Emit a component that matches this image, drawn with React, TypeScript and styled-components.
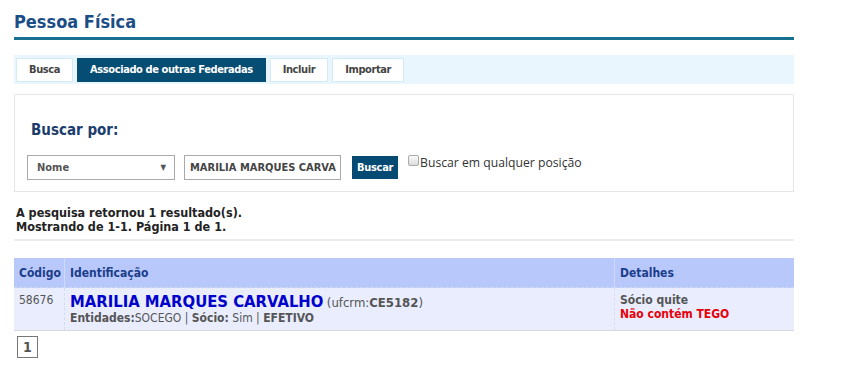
import React from 'react'
import styled, { createGlobalStyle } from 'styled-components'

const GlobalStyle = createGlobalStyle`
  body {
    margin: 0;
    background: #fff;
    font-family: Tahoma, "DejaVu Sans Condensed", "DejaVu Sans", sans-serif;
    color: #333;
  }
`

const Page = styled.div`
  width: 780px;
  margin-left: 14px;
  padding-top: 10px;
`

const Title = styled.h1`
  margin: 0;
  font-size: 18px;
  font-weight: bold;
  color: #1b4d86;
  line-height: 23px;
  padding-bottom: 4px;
  border-bottom: 3px solid #17708f;
`

const TabBar = styled.div`
  margin-top: 15px;
  background: #eaf6fd;
  height: 29px;
  display: flex;
  align-items: center;
  gap: 4px;
  padding-left: 2px;
`

const Tab = styled.div<{ $active?: boolean }>`
  height: 24px;
  box-sizing: border-box;
  padding: 0 12px;
  display: flex;
  align-items: center;
  font-size: 11px;
  font-weight: bold;
  letter-spacing: -0.4px;
  color: ${(p) => (p.$active ? '#fff' : '#444')};
  background: ${(p) => (p.$active ? '#064d73' : '#fff')};
  border: 1px solid ${(p) => (p.$active ? '#064d73' : '#d3eaf7')};
`

const SearchPanel = styled.div`
  margin-top: 10px;
  border: 1px solid #e6e6e6;
  height: 98px;
  box-sizing: border-box;
  padding: 26px 12px 0 12px;
`

const SearchLabel = styled.div`
  font-size: 15px;
  font-weight: bold;
  color: #1c3d6b;
  padding-left: 4px;
  line-height: 18px;
`

const SearchRow = styled.div`
  margin-top: 16px;
  display: flex;
  align-items: flex-start;
`

const Select = styled.div`
  width: 148px;
  height: 25px;
  box-sizing: border-box;
  border: 1px solid #aaa;
  display: flex;
  align-items: center;
  justify-content: space-between;
  padding: 0 8px 0 9px;
  font-size: 11px;
  font-weight: bold;
  color: #555;
  & span.arrow {
    font-size: 8px;
    color: #555;
  }
`

const TextInput = styled.div`
  margin-left: 9px;
  width: 157px;
  height: 25px;
  box-sizing: border-box;
  border: 1px solid #aaa;
  display: flex;
  align-items: center;
  padding-left: 5px;
  font-size: 11px;
  font-weight: bold;
  color: #444;
  overflow: hidden;
  white-space: nowrap;
`

const Button = styled.div`
  margin-left: 11px;
  margin-top: 1px;
  height: 23px;
  padding: 0 5px;
  display: flex;
  align-items: center;
  background: #054a72;
  color: #fff;
  font-size: 11px;
  font-weight: bold;
  letter-spacing: -0.3px;
`

const CheckLabel = styled.label`
  display: flex;
  align-items: flex-start;
  margin-left: 10px;
  font-family: "Open Sans", sans-serif;
  font-size: 12.2px;
  color: #333;
  line-height: 16px;
`

const Check = styled.span`
  width: 11px;
  height: 11px;
  box-sizing: border-box;
  border: 1px solid #aaa;
  border-radius: 2px;
  background: linear-gradient(#fafafa, #ddd);
  margin-right: 1px;
`

const Summary = styled.div`
  margin-top: 14px;
  padding-left: 2px;
  font-size: 12.5px;
  font-weight: bold;
  color: #222;
  line-height: 14px;
  padding-bottom: 5px;
  border-bottom: 2px solid #ececec;
`

const Table = styled.div`
  margin-top: 17px;
  display: grid;
  grid-template-columns: 50px 550px 180px;
  border-bottom: 1px solid #d9d9d9;
`

const HeadCell = styled.div<{ $sep?: boolean }>`
  background: #b8c8fb;
  height: 30px;
  box-sizing: border-box;
  display: flex;
  align-items: center;
  padding-left: 5px;
  font-size: 12px;
  font-weight: bold;
  color: #1c3d8a;
  border-left: ${(p) => (p.$sep ? '1px solid #cfd9fb' : 'none')};
  border-bottom: 1px dashed #cfd6f0;
`

const Cell = styled.div<{ $sep?: boolean }>`
  background: #e9edfd;
  height: 42px;
  box-sizing: border-box;
  padding: 5px 5px 0 5px;
  font-size: 12px;
  color: #555;
  border-left: ${(p) => (p.$sep ? '1px dashed #d5dbf3' : 'none')};
  line-height: 14px;
`

const Name = styled.span`
  font-size: 16.5px;
  font-weight: bold;
  color: #0000cc;
  line-height: 18px;
`

const Crm = styled.span`
  font-size: 13px;
  color: #555;
`

const Status = styled.div<{ $warn?: boolean }>`
  font-weight: bold;
  color: ${(p) => (p.$warn ? '#e8000b' : '#555')};
`

const Pager = styled.div`
  margin-top: 5px;
  margin-left: 3px;
  width: 21px;
  height: 22px;
  box-sizing: border-box;
  border: 1px solid #777;
  display: flex;
  align-items: center;
  justify-content: center;
  font-size: 14px;
  font-weight: bold;
  color: #555;
`

const tabs = ['Busca', 'Associado de outras Federadas', 'Incluir', 'Importar']

export default function App() {
  return (
    <>
      <GlobalStyle />
      <Page>
        <Title>Pessoa Física</Title>
        <TabBar>
          {tabs.map((t, i) => (
            <Tab key={t} $active={i === 1}>{t}</Tab>
          ))}
        </TabBar>
        <SearchPanel>
          <SearchLabel>Buscar por:</SearchLabel>
          <SearchRow>
            <Select>
              <span>Nome</span>
              <span className="arrow">▼</span>
            </Select>
            <TextInput>MARILIA MARQUES CARVA</TextInput>
            <Button>Buscar</Button>
            <CheckLabel>
              <Check />
              Buscar em qualquer posição
            </CheckLabel>
          </SearchRow>
        </SearchPanel>
        <Summary>
          A pesquisa retornou 1 resultado(s).
          <br />
          Mostrando de 1-1. Página 1 de 1.
        </Summary>
        <Table>
          <HeadCell>Código</HeadCell>
          <HeadCell $sep>Identificação</HeadCell>
          <HeadCell $sep>Detalhes</HeadCell>
          <Cell>58676</Cell>
          <Cell $sep>
            <Name>MARILIA MARQUES CARVALHO</Name>{' '}
            <Crm>
              (ufcrm:<b>CE5182</b>)
            </Crm>
            <div>
              <b>Entidades:</b>SOCEGO | <b>Sócio:</b> Sim | <b>EFETIVO</b>
            </div>
          </Cell>
          <Cell $sep>
            <Status>Sócio quite</Status>
            <Status $warn>Não contém TEGO</Status>
          </Cell>
        </Table>
        <Pager>1</Pager>
      </Page>
    </>
  )
}
